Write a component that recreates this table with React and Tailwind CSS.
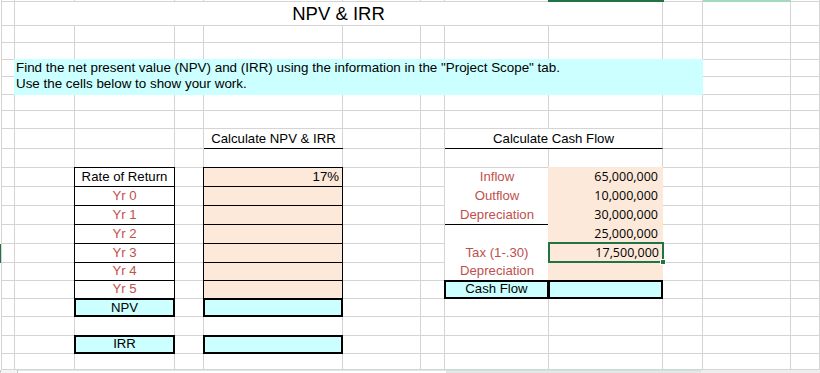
import React from "react";

// Sheet layout: 1 strip column + A..L, 1 strip row + rows 1..20
const COLS = 13;
const ROWS = 21;
const tracks =
  "grid grid-cols-[2px_13px_60px_100px_29px_139px_78px_24px_104px_114px_40px_88px_29px] grid-rows-[2px_24px_17px_17px_17px_18px_16px_18px_20px_19px_19px_19px_19px_19px_19px_18px_18px_18px_19px_18px_16px]";

const red = "text-[#c0504d]";
const num = "font-['Open_Sans',sans-serif] text-[12.5px]";
const thin = "-mt-px -ml-px border border-black flex items-end justify-center leading-[15px] pb-[2px]";
const thick = "-mt-px -ml-px border-2 border-black bg-[#ccffff] flex items-end justify-center leading-[15px]";

const years = [
  { row: "row-start-12", label: "Yr 0" },
  { row: "row-start-13", label: "Yr 1" },
  { row: "row-start-14", label: "Yr 2" },
  { row: "row-start-15", label: "Yr 3" },
  { row: "row-start-16", label: "Yr 4" },
  { row: "row-start-17", label: "Yr 5" },
];

const peachRows = [
  "row-start-12",
  "row-start-13",
  "row-start-14",
  "row-start-15",
  "row-start-16",
  "row-start-17",
];

export default function App() {
  const base = [];
  for (let r = 0; r < ROWS; r++) {
    for (let c = 0; c < COLS; c++) {
      base.push(
        <div
          key={r + "-" + c}
          className={
            c === 0
              ? "border-r border-[#d4d4d4]"
              : "border-r border-b border-[#d4d4d4]"
          }
        />
      );
    }
  }

  return (
    <div className="w-[820px] h-[373px] bg-white overflow-hidden font-['Liberation_Sans',Arial,sans-serif] text-[13.2px] text-black">
      <div className="grid">
        {/* gridlines */}
        <div className={"col-start-1 row-start-1 " + tracks}>{base}</div>

        {/* cells */}
        <div className={"col-start-1 row-start-1 " + tracks}>
          {/* selected column / row markers */}
          <div className="col-start-10 row-start-1 -mx-px bg-[#217346]" />
          <div className="col-start-12 row-start-1 bg-[#a6d9bb]" />
          <div className="col-start-1 row-start-15 w-px bg-[#217346]" />

          {/* title */}
          <div className="col-start-3 col-span-8 row-start-2 bg-white border-r border-b border-[#d4d4d4] flex items-end justify-center pb-px text-[18.5px] leading-[21px]">
            NPV &amp; IRR
          </div>

          {/* instructions */}
          <div className="col-start-3 col-span-9 row-start-5 row-span-2 -mt-px -ml-px bg-[#ccffff] pl-[2px] pt-px text-[13.4px] leading-[16px]">
            <div>
              Find the net present value (NPV) and (IRR) using the information
              in the "Project Scope" tab.
            </div>
            <div>Use the cells below to show your work.</div>
          </div>

          {/* headings */}
          <div className="col-start-6 row-start-9 border-b border-black flex items-end justify-center pb-[2px] leading-[15px]">
            Calculate NPV &amp; IRR
          </div>
          <div className="col-start-9 col-span-2 row-start-9 bg-white border-b border-b-black border-r border-r-[#d4d4d4] flex items-end justify-center pb-[2px] leading-[15px]">
            Calculate Cash Flow
          </div>

          {/* NPV & IRR table */}
          <div className={"col-start-4 row-start-11 bg-white " + thin}>
            Rate of Return
          </div>
          <div className={"col-start-6 row-start-11 bg-[#fde9d9] !justify-end pr-[3px] " + thin}>
            17%
          </div>
          {years.map((y) => (
            <React.Fragment key={y.label}>
              <div className={"col-start-4 bg-white " + y.row + " " + thin}>
                <span className={red}>{y.label}</span>
              </div>
              <div className={"col-start-6 bg-[#fde9d9] " + y.row + " " + thin} />
            </React.Fragment>
          ))}
          <div className={"col-start-4 row-start-18 " + thick}>NPV</div>
          <div className={"col-start-6 row-start-18 " + thick} />
          <div className={"col-start-4 row-start-20 pb-px " + thick}>IRR</div>
          <div className={"col-start-6 row-start-20 " + thick} />

          {/* cash flow table: white label column */}
          {peachRows.map((row) => (
            <div key={"h" + row} className={"col-start-9 -mt-px bg-white " + row} />
          ))}
          <div className="col-start-9 row-start-13 border-b border-black" />

          <div className={"col-start-9 row-start-11 flex items-end justify-center leading-[15px] pb-[3px] " + red}>
            Inflow
          </div>
          <div className={"col-start-9 row-start-12 flex items-end justify-center leading-[15px] pb-[3px] " + red}>
            Outflow
          </div>
          <div className={"col-start-9 row-start-13 flex items-end justify-center leading-[15px] pb-[3px] " + red}>
            Depreciation
          </div>
          <div className={"col-start-9 row-start-15 flex items-end justify-center leading-[15px] pb-[3px] " + red}>
            Tax (1-.30)
          </div>
          <div className={"col-start-9 row-start-16 flex items-end justify-center leading-[15px] pb-[3px] " + red}>
            Depreciation
          </div>

          {/* values */}
          <div className={"col-start-10 row-start-11 -mt-px -ml-px bg-[#fde9d9] flex items-end justify-end pr-[5px] pb-[3px] leading-[15px] " + num}>
            65,000,000
          </div>
          <div className={"col-start-10 row-start-12 -mt-px -ml-px bg-[#fde9d9] flex items-end justify-end pr-[5px] pb-[3px] leading-[15px] " + num}>
            10,000,000
          </div>
          <div className={"col-start-10 row-start-13 -mt-px -ml-px bg-[#fde9d9] border-b border-black flex items-end justify-end pr-[5px] pb-[2px] leading-[15px] " + num}>
            30,000,000
          </div>
          <div className={"col-start-10 row-start-14 -mt-px -ml-px bg-[#fde9d9] flex items-end justify-end pr-[5px] pb-[3px] leading-[15px] " + num}>
            25,000,000
          </div>
          <div className="col-start-10 row-start-16 -mt-px -ml-px bg-[#fde9d9]" />
          <div className={"col-start-10 row-start-15 -mt-[2px] -mx-px relative bg-[#fde9d9] border-2 border-[#217346] flex items-end justify-end pr-[3px] pb-px leading-[15px] " + num}>
            17,500,000
            <span className="absolute -right-[4px] -bottom-[4px] w-[6px] h-[6px] bg-[#217346] border border-white" />
          </div>

          <div className={"col-start-9 row-start-17 pb-px " + thick}>Cash Flow</div>
          <div className={"col-start-10 row-start-17 " + thick} />
        </div>
      </div>

      {/* sheet tab strip */}
      <div className="flex h-[3px]">
        <div className="w-[18px] border-l border-r border-[#c8c8c8] bg-[#f4f4f4]" />
        <div className="w-[428px] bg-white border-t border-[#cfeeee]" />
        <div className="w-[255px] bg-[#e6e6e6] border-t border-[#bfe9e4]" />
        <div className="flex-1 bg-[#eeeeee]" />
      </div>
    </div>
  );
}
